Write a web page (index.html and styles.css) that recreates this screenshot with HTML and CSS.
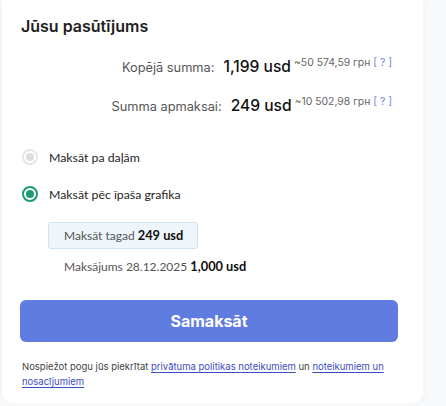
FILE: index.html
```html
<!DOCTYPE html>
<html lang="lv">
<head>
<meta charset="utf-8">
<link rel="stylesheet" href="styles.css">
</head>
<body>
<div class="card">
  <h2 class="title">Jūsu pasūtījums</h2>
  <div class="sum-row">
    <span class="sum-label">Kopējā summa:</span>
    <span class="sum-value">1,199 usd</span>
    <span class="sum-conv">~50 574,59 грн <span class="help">[ ? ]</span></span>
  </div>
  <div class="sum-row">
    <span class="sum-label">Summa apmaksai:</span>
    <span class="sum-value">249 usd</span>
    <span class="sum-conv">~10 502,98 грн <span class="help">[ ? ]</span></span>
  </div>
  <div class="options">
    <label class="option">
      <span class="radio disabled"></span>
      <span class="option-text">Maksāt pa daļām</span>
    </label>
    <label class="option">
      <span class="radio checked"></span>
      <span class="option-text">Maksāt pēc īpaša grafika</span>
    </label>
  </div>
  <div class="schedule">
    <div class="pay-now">Maksāt tagad <b>249 usd</b></div>
    <div class="pay-later">Maksājums 28.12.2025 <b>1,000 usd</b></div>
  </div>
  <button class="pay-btn">Samaksāt</button>
  <p class="terms">Nospiežot pogu jūs piekrītat <a href="#">privātuma politikas noteikumiem</a> un <a href="#">noteikumiem un</a> <a href="#">nosacījumiem</a></p>
</div>
</body>
</html>
```
FILE: styles.css
```css
html, body {
  margin: 0;
  padding: 0;
  background: #f8f9fb;
}
body {
  font-family: "Inter", "Noto Sans", sans-serif;
  color: #1d1d1f;
}
.card {
  margin-left: 2px;
  width: 421px;
  height: 403px;
  box-sizing: border-box;
  background: #ffffff;
  border-radius: 0 0 10px 10px;
  box-shadow: 0 0 6px rgba(40, 60, 120, 0.05);
  padding: 16px 25px 0 18px;
}
.title {
  margin: 0 0 0 1px;
  font-size: 16px;
  font-weight: 600;
  line-height: 20px;
  color: #222;
}
.sum-row {
  display: flex;
  justify-content: flex-end;
  align-items: baseline;
  padding-right: 6px;
  margin-top: 20px;
  line-height: 22px;
}
.sum-row + .sum-row {
  margin-top: 15px;
}
.sum-label {
  font-size: 12.8px;
  color: #555;
  margin-right: 9px;
}
.sum-value {
  font-size: 15.6px;
  font-weight: 500;
  color: #111;
  margin-right: 3px;
}
.sum-conv {
  font-size: 10.4px;
  color: #666;
  position: relative;
  top: -6px;
}
.help {
  color: #7582ee;
}
.options {
  margin-top: 30px;
  display: flex;
  flex-direction: column;
  gap: 21px;
  font-family: "Lato", sans-serif;
}
.option {
  display: flex;
  align-items: center;
  gap: 11px;
  padding-left: 2px;
  height: 16px;
}
.radio {
  width: 12px;
  height: 12px;
  border-radius: 50%;
  border: 2px solid #e6e6e6;
  box-sizing: content-box;
  position: relative;
  flex: none;
}
.radio::after {
  content: "";
  position: absolute;
  left: 2px;
  top: 2px;
  width: 8px;
  height: 8px;
  border-radius: 50%;
  background: #dddddd;
}
.radio.checked {
  border-color: #1f9c6e;
}
.radio.checked::after {
  background: #1f9c6e;
}
.option-text {
  font-size: 12.3px;
  color: #1e1e1e;
}
.schedule {
  margin-top: 20px;
  padding-left: 28px;
  font-family: "Lato", sans-serif;
}
.pay-now {
  display: inline-block;
  background: #eff6fb;
  border: 1px solid #cfe3f3;
  border-radius: 3px;
  padding: 0 14px 0 15px;
  line-height: 25px;
  font-size: 12px;
  color: #555;
}
.pay-now b, .pay-later b {
  font-size: 12.8px;
  font-weight: 700;
  color: #111;
}
.pay-later {
  margin-top: 8px;
  padding-left: 16px;
  font-size: 12px;
  color: #555;
  line-height: 18px;
}
.pay-btn {
  display: block;
  width: 100%;
  margin: 24px 0 0 0;
  height: 42px;
  border: none;
  border-radius: 6px;
  background: #607ce0;
  color: #fff;
  font-family: "Inter", sans-serif;
  font-size: 16px;
  font-weight: 700;
}
.terms {
  margin: 18px 0 0 2px;
  font-size: 9.5px;
  line-height: 14.5px;
  color: #444;
}
.terms a {
  color: #3b4cc0;
  text-decoration: underline;
  text-underline-offset: 2px;
}
```
